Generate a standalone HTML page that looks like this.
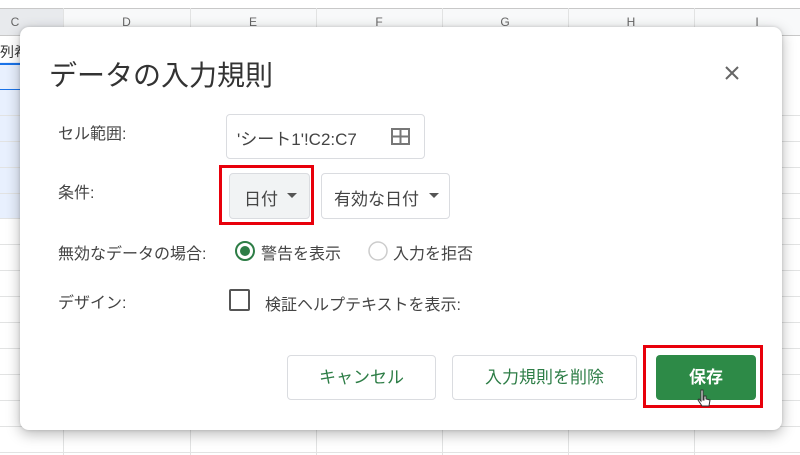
<!DOCTYPE html>
<html><head><meta charset="utf-8"><style>
*{margin:0;padding:0;box-sizing:border-box}
body{width:800px;height:455px;overflow:hidden;background:#fff;position:relative;font-family:"Liberation Sans","Noto Sans CJK JP",sans-serif;color:#3c4043}
.a{position:absolute}
.vl{position:absolute;top:8px;bottom:0;width:1px;background:#e2e3e3}
.hl{position:absolute;left:0;right:0;height:1px;background:#e2e3e3}
.col{position:absolute;top:9px;height:26px;font-size:12px;color:#666;text-align:center;line-height:26px}
.dlg{position:absolute;left:20px;top:27px;width:762px;height:403px;background:#fff;border-radius:9px;box-shadow:0 4px 14px rgba(0,0,0,.28),0 0 3px rgba(0,0,0,.15)}
.lbl{position:absolute;font-size:16px;color:#444}
.box{position:absolute;border:1px solid #dadce0;border-radius:4px;background:#fff}
.btn{position:absolute;border:1px solid #dadce0;border-radius:4px;background:#fff;color:#2d7d46;font-size:17px;text-align:center}
.red{position:absolute;border:3px solid #e8000b}
</style></head><body>
<div class="hl" style="top:8px;background:#c8c8c8"></div>
<div class="a" style="left:0;top:9px;width:800px;height:26px;background:#f8f9fa"></div>
<div class="a" style="left:0;top:9px;width:63px;height:26px;background:#e8eaed"></div>
<div class="hl" style="top:35px;background:#c8c8c8"></div>
<div class="a" style="left:0;top:62px;width:20px;height:156px;background:#e8f0fe"></div>
<div class="a" style="left:0;top:63px;width:20px;height:2px;background:#1a73e8"></div>
<div class="a" style="left:0;top:89px;width:20px;height:1px;background:#1a73e8"></div>
<div class="hl" style="top:115px"></div><div class="hl" style="top:141px"></div><div class="hl" style="top:167px"></div><div class="hl" style="top:193px"></div><div class="hl" style="top:218px"></div><div class="hl" style="top:244px"></div><div class="hl" style="top:270px"></div><div class="hl" style="top:296px"></div><div class="hl" style="top:322px"></div><div class="hl" style="top:348px"></div><div class="hl" style="top:374px"></div><div class="hl" style="top:400px"></div><div class="hl" style="top:426px"></div><div class="hl" style="top:452px"></div>
<div class="vl" style="left:63px"></div><div class="vl" style="left:190px"></div><div class="vl" style="left:316px"></div><div class="vl" style="left:442px"></div><div class="vl" style="left:568px"></div><div class="vl" style="left:694px"></div>
<div class="col" style="left:0;width:30px">C</div><div class="col" style="left:63px;width:127px">D</div><div class="col" style="left:190px;width:126px">E</div><div class="col" style="left:316px;width:126px">F</div><div class="col" style="left:442px;width:126px">G</div><div class="col" style="left:568px;width:126px">H</div><div class="col" style="left:694px;width:126px">I</div>
<div class="a" style="left:0;top:42px;font-size:14px;color:#333">列希</div>
<div class="dlg"></div>
<div class="a" style="left:49px;top:54px;font-size:28px;color:#333">データの入力規則</div>
<svg class="a" style="left:724px;top:65px" width="16" height="16"><path d="M2 2L14 14M14 2L2 14" stroke="#666" stroke-width="2"/></svg>
<div class="lbl" style="left:58px;top:120px">セル範囲:</div>
<div class="box" style="left:226px;top:114px;width:199px;height:45px"></div>
<div class="a" style="left:237px;top:125px;font-size:17px;color:#444">'シート1'!C2:C7</div>
<svg class="a" style="left:391px;top:128px" width="19" height="17"><rect x="1" y="1" width="17" height="15" fill="none" stroke="#777" stroke-width="2"/><path d="M9.5 1V16M1 8.5H18" stroke="#777" stroke-width="2"/></svg>
<div class="lbl" style="left:58px;top:179px">条件:</div>
<div class="box" style="left:229px;top:173px;width:81px;height:46px;background:#f1f3f4"></div>
<div class="a" style="left:244px;top:185px;font-size:17px;color:#444">日付</div>
<svg class="a" style="left:287px;top:193px" width="10" height="6"><path d="M0 0H10L5 5Z" fill="#555"/></svg>
<div class="red" style="left:219px;top:165px;width:95px;height:60px"></div>
<div class="box" style="left:321px;top:173px;width:129px;height:46px"></div>
<div class="a" style="left:334px;top:185px;font-size:17px;color:#444">有効な日付</div>
<svg class="a" style="left:429px;top:193px" width="10" height="6"><path d="M0 0H10L5 5Z" fill="#555"/></svg>
<div class="lbl" style="left:58px;top:240px">無効なデータの場合:</div>
<svg class="a" style="left:234px;top:240px" width="22" height="22"><circle cx="11" cy="11" r="9" fill="none" stroke="#2d7d46" stroke-width="2"/><circle cx="11" cy="11" r="5" fill="#2d7d46"/></svg>
<div class="lbl" style="left:261px;top:240px">警告を表示</div>
<svg class="a" style="left:367px;top:240px" width="22" height="22"><circle cx="11" cy="11" r="9" fill="none" stroke="#ccc" stroke-width="1.5"/></svg>
<div class="lbl" style="left:393px;top:240px">入力を拒否</div>
<div class="lbl" style="left:58px;top:289px">デザイン:</div>
<div class="a" style="left:229px;top:289px;width:21px;height:22px;border:2px solid #555;border-radius:2px"></div>
<div class="lbl" style="left:265px;top:291px">検証ヘルプテキストを表示:</div>
<div class="btn" style="left:287px;top:355px;width:149px;height:45px;line-height:43px">キャンセル</div>
<div class="btn" style="left:452px;top:355px;width:185px;height:45px;line-height:43px">入力規則を削除</div>
<div class="btn" style="left:656px;top:355px;width:100px;height:45px;line-height:45px;background:#2d8a47;border:none;color:#fff;font-weight:bold">保存</div>
<div class="red" style="left:643px;top:345px;width:120px;height:63px"></div>
<svg class="a" style="left:696px;top:389px" width="16" height="20"><path d="M5 1v11l-2-2-1 1 4 6h7l1-6-4-1V7H8v4H7V1z" fill="#fff" stroke="#333" stroke-width="1"/></svg>
</body></html>
